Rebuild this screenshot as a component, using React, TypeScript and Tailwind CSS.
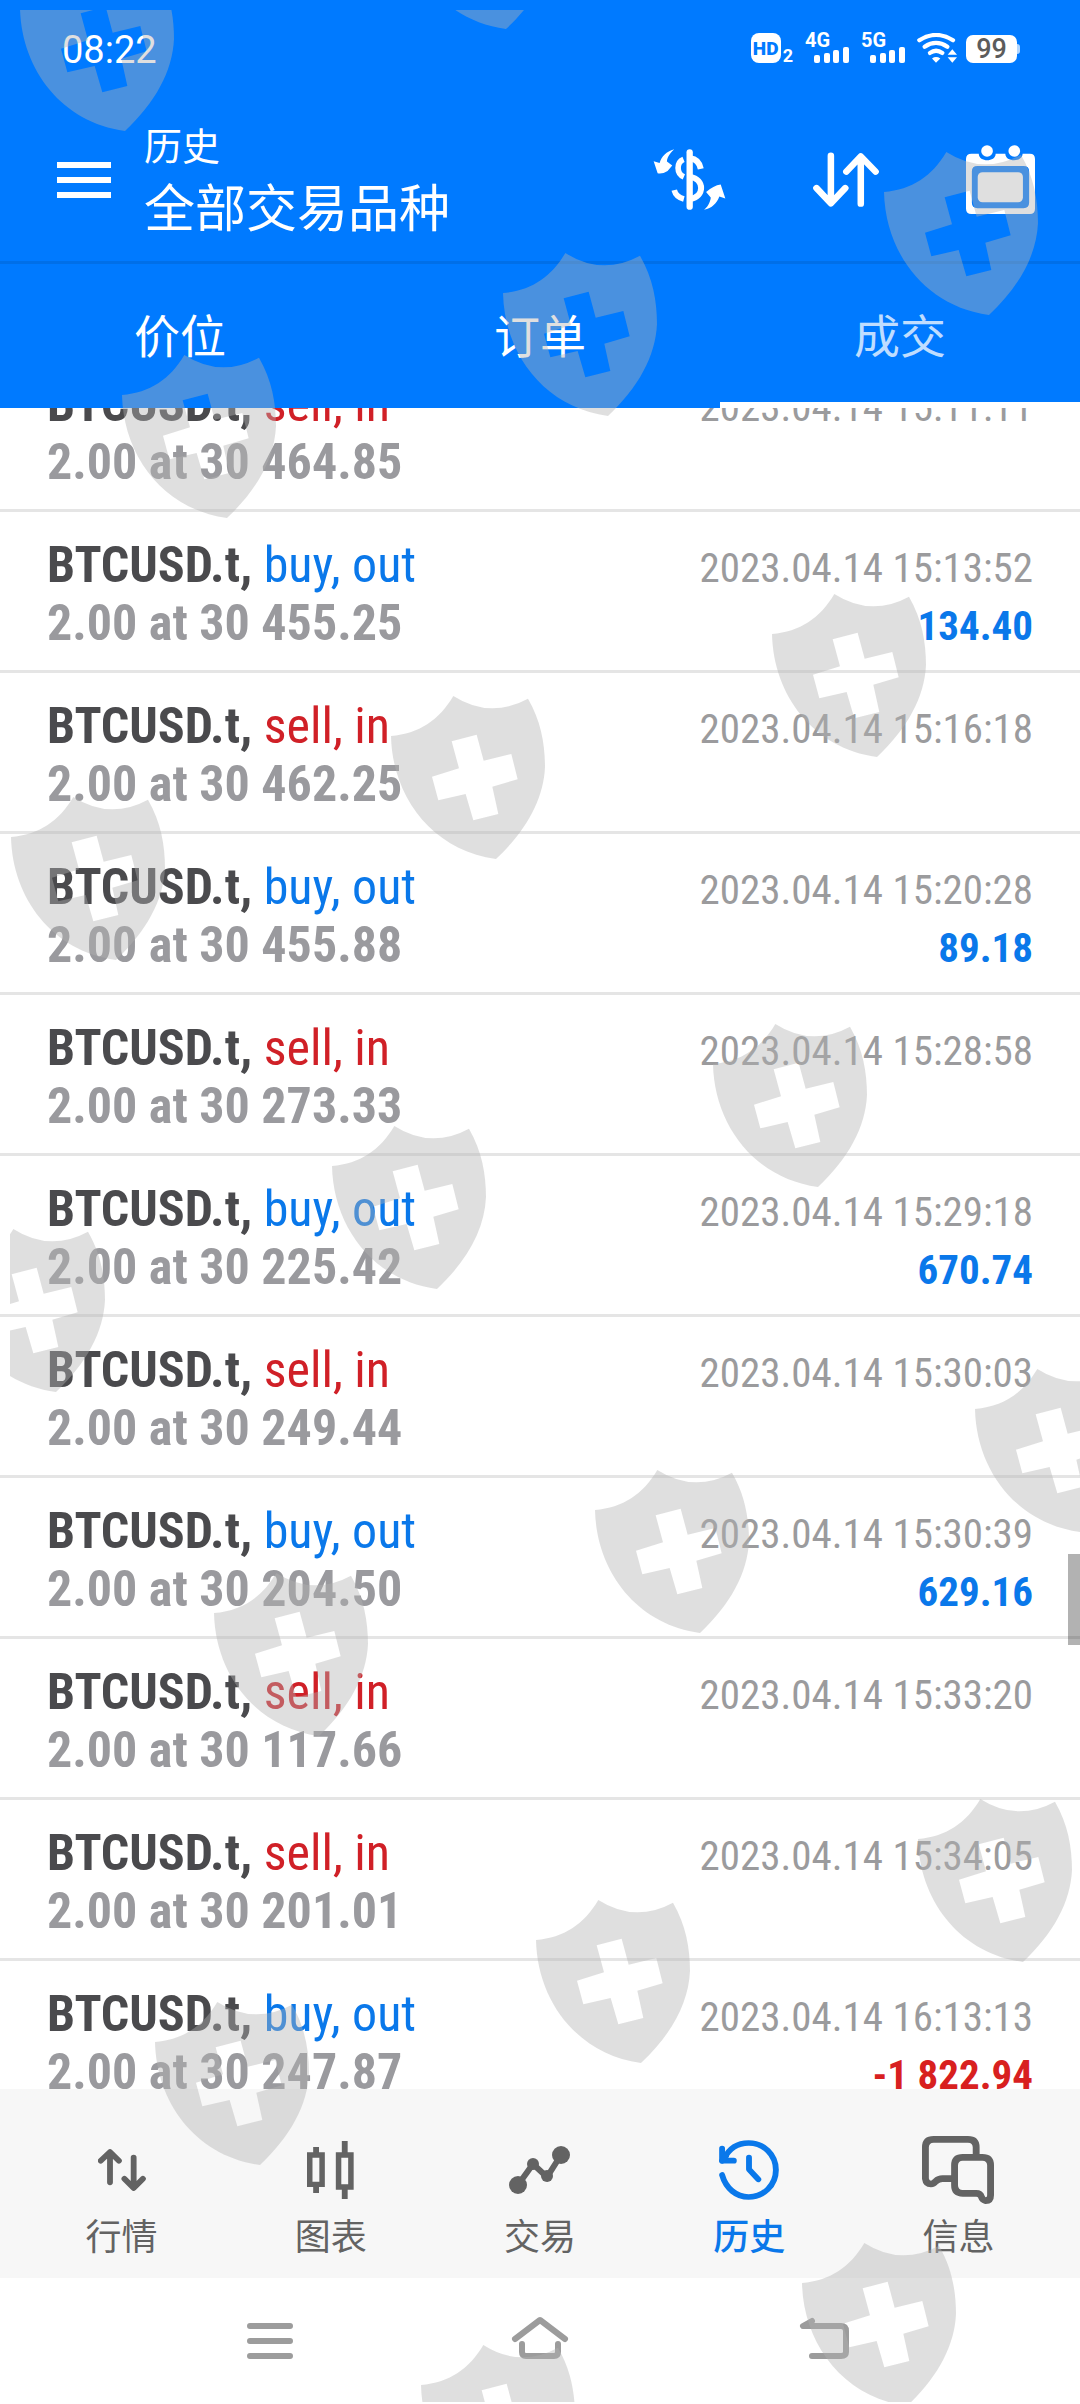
import React from "react";

type Deal = {
  kind: "buy, out" | "sell, in";
  price: string;
  time: string;
  profit?: string;
};

const deals: Deal[] = [
  { kind: "sell, in", price: "30 464.85", time: "2023.04.14 15:11:11" },
  { kind: "buy, out", price: "30 455.25", time: "2023.04.14 15:13:52", profit: "134.40" },
  { kind: "sell, in", price: "30 462.25", time: "2023.04.14 15:16:18" },
  { kind: "buy, out", price: "30 455.88", time: "2023.04.14 15:20:28", profit: "89.18" },
  { kind: "sell, in", price: "30 273.33", time: "2023.04.14 15:28:58" },
  { kind: "buy, out", price: "30 225.42", time: "2023.04.14 15:29:18", profit: "670.74" },
  { kind: "sell, in", price: "30 249.44", time: "2023.04.14 15:30:03" },
  { kind: "buy, out", price: "30 204.50", time: "2023.04.14 15:30:39", profit: "629.16" },
  { kind: "sell, in", price: "30 117.66", time: "2023.04.14 15:33:20" },
  { kind: "sell, in", price: "30 201.01", time: "2023.04.14 15:34:05" },
  { kind: "buy, out", price: "30 247.87", time: "2023.04.14 16:13:13", profit: "-1 822.94" },
];

function SignalBars() {
  return (
    <svg className="h-[16px] w-[35px]" viewBox="0 0 35 16" fill="currentColor" aria-hidden="true">
      <rect x="0" y="8" width="6" height="8" rx="2" />
      <rect x="10" y="6" width="6" height="10" rx="2" />
      <rect x="19" y="3" width="6" height="13" rx="2" />
      <rect x="29" y="0" width="6" height="16" rx="2" />
    </svg>
  );
}

function Signal({ label }: { label: string }) {
  return (
    <div className="flex h-[30px] w-[44px] flex-col">
      <span className="h-[14px] text-[20px] leading-[14px] font-bold">{label}</span>
      <span className="ml-[9px]">
        <SignalBars />
      </span>
    </div>
  );
}

function StatusBar() {
  return (
    <div className="flex h-[100px] items-center justify-between pr-[60px] pl-[62px]">
      <span className="text-[38px] leading-[44px]">08:22</span>
      <div className="flex items-center pb-[4px]">
        <div className="mr-[12px] flex items-end">
          <span className="flex h-[30px] w-[30px] items-center justify-center rounded-[8px] bg-white text-[19px] leading-none font-black text-[#007aff]">
            HD
          </span>
          <span className="ml-[2px] text-[18px] leading-[14px] font-bold">2</span>
        </div>
        <div className="mr-[12px]">
          <Signal label="4G" />
        </div>
        <div className="mr-[12px]">
          <Signal label="5G" />
        </div>
        <svg className="mr-[9px] h-[30px] w-[40px]" viewBox="530 38 120 92" preserveAspectRatio="none" fill="currentColor" aria-label="Wi-Fi">
          <g fill="none" stroke="currentColor" strokeWidth="13" strokeLinecap="round">
            <path d="M537 60Q587 28 638 60" />
            <path d="M553 80Q587 57 621 80" />
            <path d="M569 99Q587 86 606 99" />
          </g>
          <path d="M575 116Q587 107 600 116L587 129ZM636 88L650 105H622ZM636 129L650 112H622Z" />
        </svg>
        <div className="flex items-center pt-[2px]">
          <span className="flex h-[28px] w-[51px] items-center justify-center rounded-[7px] bg-white text-[27px] leading-none font-medium text-[#5c5c5c]">
            99
          </span>
          <span className="h-[10px] w-[3px] rounded-r-[3px] bg-[#b3d7ff]" />
        </div>
      </div>
    </div>
  );
}

function AppBar() {
  return (
    <div className="flex h-[161px] items-center pr-[45px] pb-[2px] pl-[57px]">
      <button type="button" aria-label="菜单" className="flex w-[54px] flex-col gap-[9px]">
        <span className="h-[6px] bg-white" />
        <span className="h-[6px] bg-white" />
        <span className="h-[6px] bg-white" />
      </button>
      <div className="ml-[33px] flex flex-1 flex-col gap-1 pt-1">
        <span className="text-[38px] leading-[52px]">历史</span>
        <h1 className="text-[51px] leading-[66px]">全部交易品种</h1>
      </div>
      <div className="flex items-center gap-[87px]">
        <button type="button" aria-label="货币">
          <svg className="h-[61px] w-[73px]" viewBox="40 58 220 184" preserveAspectRatio="none" fill="none" stroke="currentColor">
            <path d="M150.500 68V232" strokeWidth="19" strokeLinecap="round" />
            <path d="M132 89C110 98 110 132 133 142M104 182C108 198 118 205 133 209" strokeWidth="17" />
            <path d="M152 86C170 88 180 98 184 118M152 142C196 150 196 202 152 209" strokeWidth="18" />
            <path
              d="M104 59C88 74 82 86 82 96L98 108L84 124Q68 134 54 131L42 95L60 100C66 80 80 66 104 59ZM194 241C208 230 214 212 214 204L200 188Q222 168 244 165L258 207L240 201C232 222 218 236 194 241Z"
              fill="currentColor"
              stroke="none"
            />
          </svg>
        </button>
        <button type="button" aria-label="排序">
          <svg className="h-[55px] w-[66px]" viewBox="793 457 192 165" preserveAspectRatio="none" fill="none" stroke="currentColor" strokeWidth="19" strokeLinecap="round" strokeLinejoin="round">
            <path d="M845 468V608M803 565L845 611L887 565M932 612V472M890 516L932 470L975 516" />
          </svg>
        </button>
        <button type="button" aria-label="日期">
          <svg className="h-[69px] w-[69px]" viewBox="1237 432 200 206" preserveAspectRatio="none" fill="currentColor">
            <path
              fillRule="evenodd"
              d="M1253 458H1274C1274 484 1323 484 1323 458H1351C1351 484 1401 484 1401 458H1422Q1437 458 1437 474V622Q1437 638 1422 638H1253Q1237 638 1237 622V474Q1237 458 1253 458ZM1270 495Q1254 495 1254 511V604Q1254 621 1270 621H1404Q1420 621 1420 604V511Q1420 495 1404 495Z"
            />
            <circle cx="1298" cy="450" r="17" />
            <circle cx="1377" cy="450" r="17" />
            <rect x="1271" y="513" width="131" height="90" rx="14" />
          </svg>
        </button>
      </div>
    </div>
  );
}

function Tabs() {
  return (
    <div role="tablist" className="grid grid-cols-3 border-t-[3px] border-[#006fe8] text-[46px] leading-[60px]">
      <button type="button" role="tab" aria-selected="false" className="border-b-[6px] border-transparent pt-[43px] pb-[35px]">
        价位
      </button>
      <button type="button" role="tab" aria-selected="false" className="border-b-[6px] border-transparent pt-[43px] pb-[35px]">
        订单
      </button>
      <button type="button" role="tab" aria-selected="true" className="border-b-[6px] border-white pt-[43px] pb-[35px] text-white/75">
        成交
      </button>
    </div>
  );
}

function DealRow({ deal }: { deal: Deal }) {
  const kindColor = deal.kind === "buy, out" ? "text-[#0a78ea]" : "text-[#d02027]";
  const profitColor = deal.profit?.startsWith("-") ? "text-[#d8201f]" : "text-[#0a78ea]";
  return (
    <li className="h-[161px] shrink-0 border-b-[3px] border-[#e5e5e5] px-[47px] pt-[24px] font-['Roboto_Condensed','Liberation_Sans_Narrow',Roboto,sans-serif] whitespace-nowrap">
      <div className="flex items-baseline justify-between">
        <span className={`text-[50px] leading-[58px] ${kindColor}`}>
          <span className="font-bold text-[#4a4a4d]">BTCUSD.t,</span> {deal.kind}
        </span>
        <time className="text-[41px] leading-[44px] text-[#9b9b9d]">{deal.time}</time>
      </div>
      <div className="flex items-baseline justify-between font-bold">
        <span className="text-[50px] leading-[58px] text-[#9a9a9e]">2.00 at {deal.price}</span>
        <span className={`text-[41px] leading-[44px] ${profitColor}`}>{deal.profit}</span>
      </div>
    </li>
  );
}

const navItems = [
  {
    label: "行情",
    active: false,
    icon: (
      <svg className="h-[42px] w-[48px]" viewBox="285 627 140 126" preserveAspectRatio="none" fill="none" stroke="currentColor" strokeWidth="17" strokeLinecap="round" strokeLinejoin="round">
        <path d="M320 727V640M293 662L320 636L346 662M389 653V740M362 716L389 744L416 716" />
      </svg>
    ),
  },
  {
    label: "图表",
    active: false,
    icon: (
      <svg className="h-[58px] w-[47px]" viewBox="893 606 137 174" preserveAspectRatio="none" fill="none" stroke="currentColor">
        <path d="M919.500 624V648M919.500 738V762M1003 606V648M1003 744V780" strokeWidth="17" />
        <path d="M901 648H937V736H901ZM985 648H1021V744H985Z" strokeWidth="16" />
      </svg>
    ),
  },
  {
    label: "交易",
    active: false,
    icon: (
      <svg className="h-[48px] w-[61px]" viewBox="0 0 61 48" fill="currentColor">
        <path d="M9 39L24 18L38 31L52 9" fill="none" stroke="currentColor" strokeWidth="6" />
        <circle cx="9" cy="39" r="9" />
        <circle cx="24" cy="18" r="6" />
        <circle cx="38" cy="30" r="6" />
        <circle cx="52" cy="9" r="9" />
      </svg>
    ),
  },
  {
    label: "历史",
    active: true,
    icon: (
      <svg className="h-[60px] w-[60px]" viewBox="520 600 174 180" preserveAspectRatio="none" fill="none" stroke="currentColor" strokeWidth="17" strokeLinecap="round" strokeLinejoin="round">
        <path d="M529 705C540 745 570 771 606 771C650 771 685 735 685 690C685 644 650 609 606 609C575 609 550 624 535 656" />
        <path d="M529 626V662H563M607 653V688L634 718" />
        <path d="M529 662L540 648" />
      </svg>
    ),
  },
  {
    label: "信息",
    active: false,
    icon: (
      <svg className="h-[68px] w-[72px]" viewBox="1108 588 210 204" preserveAspectRatio="none" fill="none" stroke="currentColor" strokeWidth="20" strokeLinejoin="round">
        <path d="M1266 648V622Q1266 598 1242 598H1142Q1118 598 1118 622V716Q1120 732 1134 732Q1142 732 1148 724Q1156 716 1168 716H1196" />
        <path d="M1227 652H1284Q1308 652 1308 676V766Q1308 782 1294 782Q1284 780 1281 770Q1278 760 1266 760H1227Q1203 760 1203 736V676Q1203 652 1227 652Z" />
      </svg>
    ),
  },
];

function BottomNav() {
  return (
    <nav className="grid h-[189px] shrink-0 grid-cols-5 bg-[#f7f7f7] px-[17px] pt-[47px]">
      {navItems.map((item) => (
        <button
          key={item.label}
          type="button"
          className={`flex flex-col items-center gap-[12px] ${item.active ? "font-medium text-[#0a78ea]" : "text-[#636363]"}`}
        >
          <span className="flex h-[68px] items-center">{item.icon}</span>
          <span className="text-[36px] leading-[44px]">{item.label}</span>
        </button>
      ))}
    </nav>
  );
}

function SystemNav() {
  return (
    <div className="grid h-[126px] shrink-0 grid-cols-3 px-[135px] pb-[6px] text-[#9c9c9c]">
      <button type="button" aria-label="最近任务" className="flex items-center justify-center">
        <svg className="h-[44px] w-[46px]" viewBox="0 0 46 44" fill="none" stroke="currentColor" strokeWidth="6" strokeLinecap="round">
          <path d="M3 10H43M3 25H43M3 40H43" />
        </svg>
      </button>
      <button type="button" aria-label="主屏幕" className="flex items-center justify-center">
        <svg className="h-[44px] w-[58px]" viewBox="0 0 58 44" fill="none" stroke="currentColor" strokeWidth="6" strokeLinecap="round" strokeLinejoin="round">
          <path d="M4 23L29 4L54 23M11 28V36Q11 40 15 40H43Q47 40 47 36V28" />
        </svg>
      </button>
      <button type="button" aria-label="返回" className="flex items-center justify-center">
        <svg className="h-[44px] w-[78px]" viewBox="0 0 78 44" fill="none" stroke="currentColor" strokeWidth="6" strokeLinecap="round" strokeLinejoin="round">
          <path d="M41 5L32 10H70Q75 10 75 15V36Q75 40 70 40H41" />
        </svg>
      </button>
    </div>
  );
}

const shields = [
  [20, -32], [401, -134], [884, 152], [503, 253], [122, 355],
  [772, 594], [391, 696], [11, 797], [713, 1024], [332, 1126],
  [-49, 1229], [975, 1369], [595, 1470], [214, 1573], [918, 1799],
  [536, 1900], [155, 2002], [802, 2243], [421, 2345],
];

function Watermark() {
  return (
    <div className="pointer-events-none absolute inset-0 overflow-hidden pt-[10px] pb-[2px] pl-[10px]">
      <svg className="h-full w-full overflow-hidden" aria-hidden="true">
        <defs>
          <path
            id="shield"
            fillRule="evenodd"
            d="M187 0Q297 70 411 8C450 75 462 145 462 213C458 310 405 405 315 489C124 463 4 303 0 120C84 113 144 73 187 0ZM182 136L204 217L123 242L142 313L224 294L247 373L322 354L304 272L380 250L361 174L278 194L257 116Z"
          />
        </defs>
        {shields.map(([x, y]) => (
          <use
            key={`${x}:${y}`}
            href="#shield"
            transform={`translate(${x - 10} ${y - 10}) scale(0.3333)`}
            fill="#b2b2b2"
            fillOpacity="0.416"
          />
        ))}
      </svg>
    </div>
  );
}

export default function App() {
  return (
    <div className="relative flex h-screen flex-col overflow-hidden bg-white font-[Roboto,'Noto_Sans_CJK_SC',sans-serif]">
      <header className="shrink-0 bg-[#007aff] text-white">
        <StatusBar />
        <AppBar />
        <Tabs />
      </header>
      <main className="relative min-h-0 flex-1 overflow-hidden">
        <ul className="-mt-[57px] flex flex-col">
          {deals.map((deal) => (
            <DealRow key={deal.time} deal={deal} />
          ))}
        </ul>
        <div className="absolute top-[1146px] right-0 h-[91px] w-[12px] bg-black/30" />
      </main>
      <BottomNav />
      <SystemNav />
      <Watermark />
    </div>
  );
}
